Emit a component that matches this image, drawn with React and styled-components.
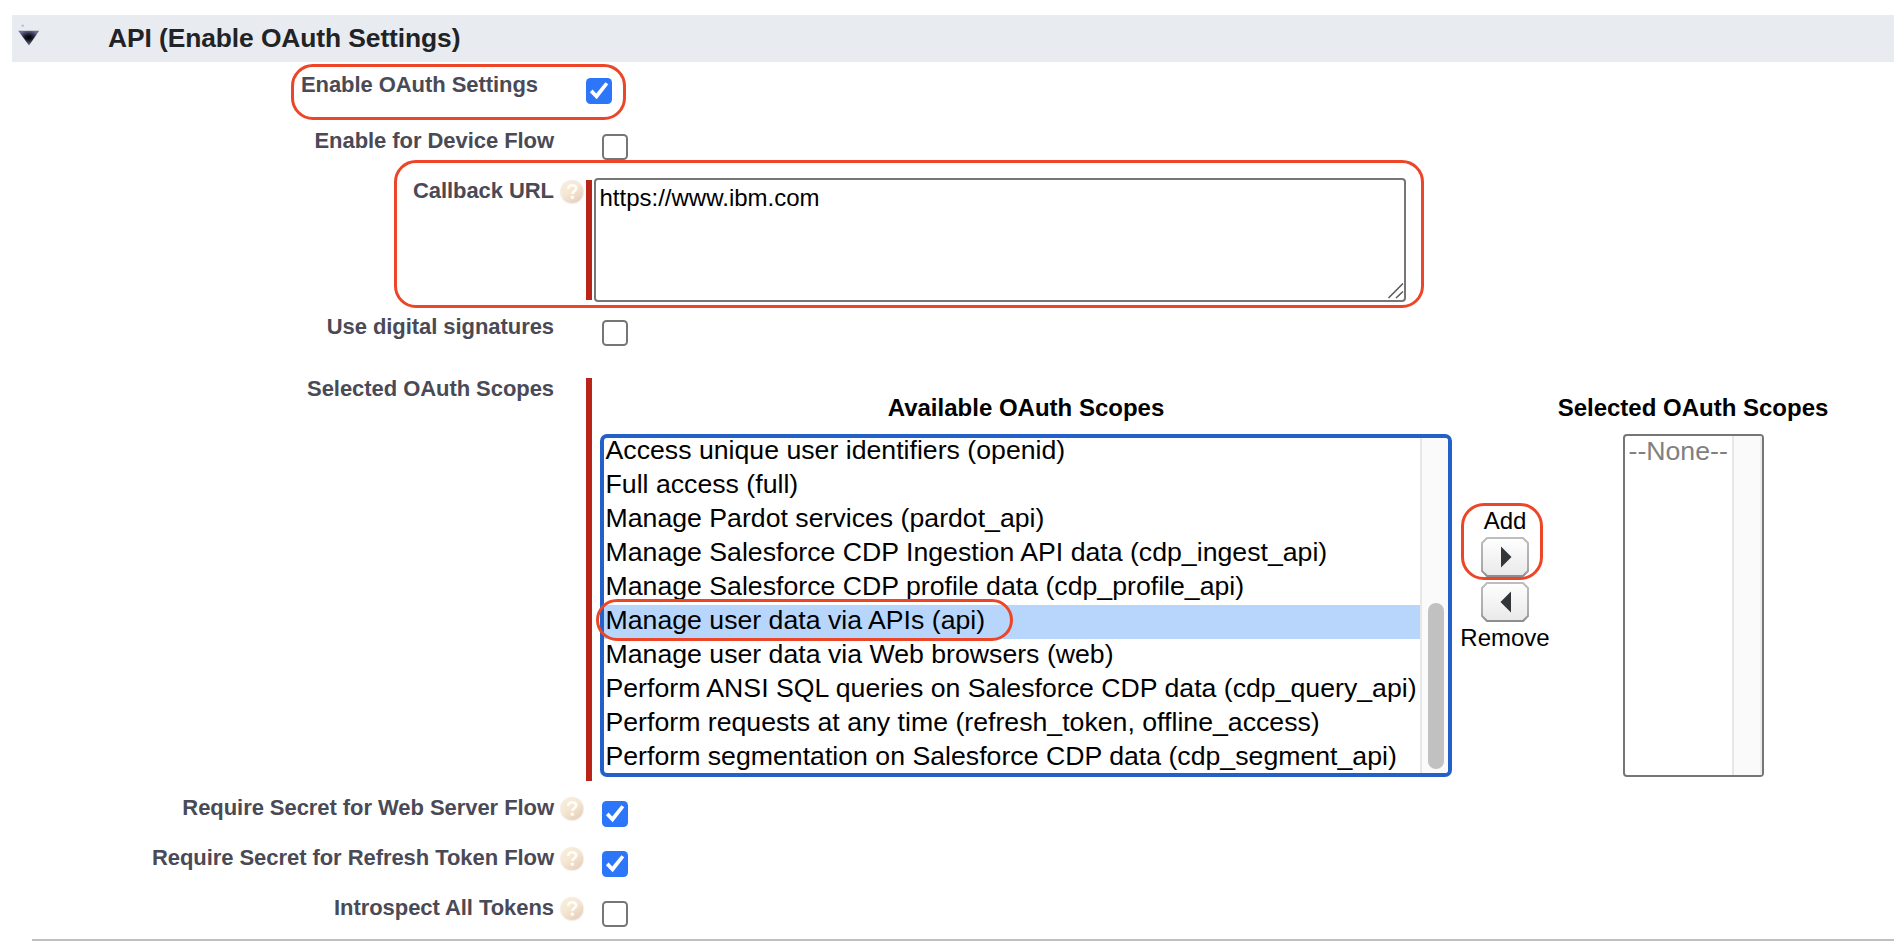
import React from "react";
import styled, { createGlobalStyle } from "styled-components";

const GlobalStyle = createGlobalStyle`
  *, *::before, *::after { box-sizing: border-box; }
  body {
    margin: 0;
    background: #fff;
    color: #000;
    font-family: "Liberation Sans", Arial, Helvetica, sans-serif;
    overflow: hidden;
  }
`;

const Page = styled.main`
  position: relative;
  width: 1894px;
  height: 946px;
  padding-top: 15px;
  overflow: hidden;
`;

const SectionHeader = styled.header`
  display: flex;
  align-items: flex-start;
  height: 47px;
  margin-left: 12px;
  padding-top: 8px;
  background: #e8ebf0;
`;

const TwistyIcon = styled.svg`
  width: 28px;
  height: 28px;
  margin-left: 4px;
  flex: none;
`;

const SectionTitle = styled.h3`
  margin: 0 0 0 64px;
  font-size: 26.4px;
  line-height: 30px;
  font-weight: 700;
  letter-spacing: -0.09px;
  color: #222326;
  white-space: nowrap;
`;

const Form = styled.form`
  padding-top: 8px;
`;

const Row = styled.div`
  display: grid;
  grid-template-columns: ${(p) => p.$labelWidth || 554}px ${(p) => p.$gap || 32}px 1fr;
  height: ${(p) => p.$height}px;
`;

const Label = styled.label`
  padding-top: 2px;
  font-size: 22px;
  line-height: 26px;
  font-weight: 700;
  letter-spacing: -0.06px;
  color: #4a4a56;
  text-align: right;
  white-space: nowrap;
`;

const HelpSlot = styled.span`
  padding: 3px 0 0 5px;
  line-height: 0;
`;

const Field = styled.div`
  display: flex;
  align-items: flex-start;
`;

const Box = styled.span`
  flex: none;
  width: 26px;
  height: 26px;
  margin: 8px 0 0 ${(p) => (p.$inset ? 16 : 0)}px;
  border-radius: 4.5px;
  border: ${(p) => (p.$checked ? "0" : "2px solid #767676")};
  background: ${(p) => (p.$checked ? "#2d76f9" : "#fff")};
  line-height: 0;
`;

const RequiredBar = styled.span`
  flex: none;
  width: 6px;
  height: ${(p) => p.$height}px;
  margin-top: 4px;
  background: #ba2419;
`;

const TextAreaWrap = styled.div`
  position: relative;
  width: 812px;
  height: 124px;
  margin: 2px 0 0 2px;
`;

const TextArea = styled.textarea`
  display: block;
  width: 100%;
  height: 100%;
  margin: 0;
  padding: 4px 3.5px;
  border: 2px solid #767676;
  border-radius: 4px;
  background: #fff;
  color: #000;
  font: 24px/28px "Liberation Sans", Arial, sans-serif;
  resize: none;
  outline: none;
`;

const Grip = styled.svg`
  position: absolute;
  right: 2px;
  bottom: 3px;
`;

const DuelingList = styled.div`
  display: flex;
  margin-left: 8px;
  padding-top: 20px;
`;

const ListColumn = styled.div`
  display: flex;
  flex-direction: column;
  align-items: center;
  width: ${(p) => p.$width}px;
`;

const ListHeading = styled.div`
  margin-bottom: 12px;
  font-size: 24px;
  line-height: 28px;
  font-weight: 700;
  white-space: nowrap;
`;

const ListBox = styled.div`
  display: flex;
  width: ${(p) => p.$width}px;
  height: 343px;
  overflow: hidden;
  background: #fff;
  border: ${(p) => (p.$focused ? "4px solid #2360c8" : "2px solid #767676")};
  border-radius: ${(p) => (p.$focused ? 7 : 4)}px;
`;

const Options = styled.ul`
  flex: 1;
  min-width: 0;
  margin: ${(p) => (p.$scrolled ? "-3px" : "0")} 0 0;
  padding: 0;
  list-style: none;
`;

const Option = styled.li`
  height: 34px;
  padding-left: ${(p) => (p.$muted ? 4 : 1.5)}px;
  font-size: 26.67px;
  line-height: 30px;
  letter-spacing: 0.01px;
  white-space: nowrap;
  color: ${(p) => (p.$muted ? "#808080" : "#000")};
  background: ${(p) => (p.$selected ? "#b8d6fb" : "transparent")};
`;

const Gutter = styled.div`
  flex: none;
  display: flex;
  flex-direction: column;
  justify-content: flex-end;
  width: ${(p) => p.$width}px;
  padding: 0 4px 4px 6px;
  background: #fafafa;
  border-left: 2px solid #e7e7e7;
  border-right: ${(p) => (p.$edge ? "2px solid #ededed" : "0")};
`;

const Thumb = styled.div`
  height: 166px;
  border-radius: 8px;
  background: #c1c1c1;
`;

const Transfer = styled.div`
  display: flex;
  flex-direction: column;
  align-items: center;
  width: 90px;
  margin: 113px 7px 0 8px;
`;

const TransferText = styled.span`
  font-size: 24px;
  line-height: 28px;
`;

const TransferButton = styled.button`
  display: block;
  width: 48px;
  height: 40px;
  margin: ${(p) => (p.$last ? "5px 0 2px" : "2px 0 0")};
  padding: 0;
  border: 0;
  background: none;
  line-height: 0;
`;

const Divider = styled.hr`
  height: 2px;
  margin: 0 0 0 32px;
  border: 0;
  background: #bfbfbf;
`;

const Highlight = styled.span`
  position: absolute;
  left: ${(p) => p.$x}px;
  top: ${(p) => p.$y}px;
  width: ${(p) => p.$w}px;
  height: ${(p) => p.$h}px;
  border: 3px solid #ec4527;
  border-radius: ${(p) => p.$r}px;
  pointer-events: none;
`;

const Twisty = () => (
  <TwistyIcon viewBox="0 0 28 28">
    <defs>
      <radialGradient id="twisty" cx="0.5" cy="0.45" r="0.5">
        <stop offset="0" stopColor="#000" />
        <stop offset="0.3" stopColor="#12121f" />
        <stop offset="1" stopColor="#6a6e92" />
      </radialGradient>
    </defs>
    <rect x="5.5" y="1.8" width="2.4" height="1.8" fill="#b9bcc6" />
    <path d="M2.2 7.8h21L13 22.6z" fill="url(#twisty)" />
  </TwistyIcon>
);

const Help = () => (
  <HelpSlot>
    <svg width="26" height="26" viewBox="0 0 26 26">
      <defs>
        <linearGradient id="help" x1="0" y1="0" x2="0.7" y2="1">
          <stop offset="0" stopColor="#f8efdd" />
          <stop offset="0.5" stopColor="#f5e8d3" />
          <stop offset="1" stopColor="#e6d0be" />
        </linearGradient>
      </defs>
      <circle cx="13" cy="13" r="12.2" fill="#f6f0ec" />
      <circle cx="13" cy="12.8" r="11.2" fill="url(#help)" />
      <path
        d="M9.2 9.8c.2-2.3 1.7-3.5 4-3.5 2.3 0 4 1.2 4 3.2 0 2.5-3.9 2.7-3.9 5.4"
        fill="none"
        stroke="#fffdf8"
        strokeWidth="2.6"
      />
      <rect x="11.8" y="16.7" width="3" height="3" rx="0.5" fill="#fffdf8" />
    </svg>
  </HelpSlot>
);

const Checkbox = ({ checked, inset = true }) => (
  <Box $checked={checked} $inset={inset} role="checkbox" aria-checked={!!checked}>
    {checked && (
      <svg width="26" height="26" viewBox="0 0 26 26">
        <path d="M3.9 14.2 6.6 11.6 10.2 15.6 19.4 4.2 22.3 6.2 10.7 21.2z" fill="#fff" />
      </svg>
    )}
  </Box>
);

const ArrowButton = ({ left, ...rest }) => (
  <TransferButton type="button" aria-label={left ? "Remove" : "Add"} {...rest}>
    <svg width="48" height="40" viewBox="0 0 48 40">
      <defs>
        <linearGradient id="face" x1="0" y1="0" x2="0" y2="1">
          <stop offset="0" stopColor="#fff" />
          <stop offset="1" stopColor="#e9e9e9" />
        </linearGradient>
        <linearGradient id="rim" x1="0" y1="0" x2="0" y2="1">
          <stop offset="0" stopColor="#bdbdbd" />
          <stop offset="0.8" stopColor="#a9a9a9" />
          <stop offset="1" stopColor="#8c8c8c" />
        </linearGradient>
      </defs>
      <path
        d="M6 1H42L47 6V34L42 39H6L1 34V6z"
        fill="url(#face)"
        stroke="url(#rim)"
        strokeWidth="2"
        strokeLinejoin="round"
      />
      <path d={left ? "M30 9.5V30.5L19.5 20z" : "M20 9.5V30.5L30.5 20z"} fill="#333638" />
    </svg>
  </TransferButton>
);

const SCOPES = [
  "Access unique user identifiers (openid)",
  "Full access (full)",
  "Manage Pardot services (pardot_api)",
  "Manage Salesforce CDP Ingestion API data (cdp_ingest_api)",
  "Manage Salesforce CDP profile data (cdp_profile_api)",
  "Manage user data via APIs (api)",
  "Manage user data via Web browsers (web)",
  "Perform ANSI SQL queries on Salesforce CDP data (cdp_query_api)",
  "Perform requests at any time (refresh_token, offline_access)",
  "Perform segmentation on Salesforce CDP data (cdp_segment_api)",
];

const CheckRow = ({ label, height, help, checked }) => (
  <Row $height={height}>
    <Label>{label}</Label>
    {help ? <Help /> : <span />}
    <Field>
      <Checkbox checked={checked} />
    </Field>
  </Row>
);

export default function App() {
  return (
    <>
      <GlobalStyle />
      <Page>
        <SectionHeader>
          <Twisty />
          <SectionTitle>API (Enable OAuth Settings)</SectionTitle>
        </SectionHeader>
        <Form>
          <Row $height={56} $labelWidth={538} $gap={48}>
            <Label>Enable OAuth Settings</Label>
            <span />
            <Field>
              <Checkbox checked inset={false} />
            </Field>
          </Row>
          <CheckRow label="Enable for Device Flow" height={50} />
          <Row $height={136}>
            <Label>Callback URL</Label>
            <Help />
            <Field>
              <RequiredBar $height={120} />
              <TextAreaWrap>
                <TextArea defaultValue="https://www.ibm.com" spellCheck={false} />
                <Grip width="16" height="16" viewBox="0 0 16 16" stroke="#555" strokeWidth="1.5">
                  <path d="M0.5 15 15 0.5M8 15 15 8.5" fill="none" />
                </Grip>
              </TextAreaWrap>
            </Field>
          </Row>
          <CheckRow label="Use digital signatures" height={62} />
          <Row $height={419}>
            <Label>Selected OAuth Scopes</Label>
            <span />
            <Field>
              <RequiredBar $height={403} />
              <DuelingList>
                <ListColumn $width={852}>
                  <ListHeading>Available OAuth Scopes</ListHeading>
                  <ListBox $width={852} $focused>
                    <Options $scrolled>
                      {SCOPES.map((s, i) => (
                        <Option key={s} $selected={i === 5}>
                          {s}
                        </Option>
                      ))}
                    </Options>
                    <Gutter $width={28}>
                      <Thumb />
                    </Gutter>
                  </ListBox>
                </ListColumn>
                <Transfer>
                  <TransferText>Add</TransferText>
                  <ArrowButton />
                  <ArrowButton left $last />
                  <TransferText>Remove</TransferText>
                </Transfer>
                <ListColumn $width={272}>
                  <ListHeading>Selected OAuth Scopes</ListHeading>
                  <ListBox $width={141}>
                    <Options>
                      <Option $muted>--None--</Option>
                    </Options>
                    <Gutter $width={30} $edge />
                  </ListBox>
                </ListColumn>
              </DuelingList>
            </Field>
          </Row>
          <CheckRow label="Require Secret for Web Server Flow" height={50} help checked />
          <CheckRow label="Require Secret for Refresh Token Flow" height={50} help checked />
          <CheckRow label="Introspect All Tokens" height={46} help />
        </Form>
        <Divider />
        <Highlight $x={291} $y={63.5} $w={335} $h={56} $r={22} />
        <Highlight $x={394} $y={159.5} $w={1030} $h={148} $r={22} />
        <Highlight $x={596} $y={599} $w={417} $h={42} $r={21} />
        <Highlight $x={1461} $y={503} $w={82} $h={77} $r={23} />
      </Page>
    </>
  );
}
